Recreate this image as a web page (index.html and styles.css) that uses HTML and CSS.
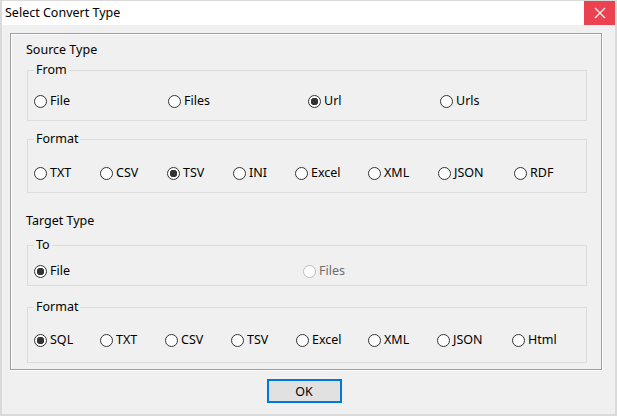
FILE: index.html
```html
<!DOCTYPE html>
<html>
<head>
<meta charset="utf-8">
<title>Select Convert Type</title>
<link rel="stylesheet" href="styles.css">
</head>
<body>
<div class="window">
  <div class="titlebar">
    <span class="title">Select Convert Type</span>
    <span class="close">
      <svg width="12" height="12" viewBox="0 0 12 12"><path d="M1 1 L11 11 M11 1 L1 11" stroke="#fff" stroke-width="1.1" fill="none"/></svg>
    </span>
  </div>
  <div class="client">
    <div class="panel">
      <div class="section-label">Source Type</div>
      <fieldset class="group g-from">
        <legend>From</legend>
        <div class="row cols-from">
          <label class="radio"><span class="dot"></span>File</label>
          <label class="radio"><span class="dot"></span>Files</label>
          <label class="radio checked"><span class="dot"></span>Url</label>
          <label class="radio"><span class="dot"></span>Urls</label>
        </div>
      </fieldset>
      <fieldset class="group g-fmt1">
        <legend>Format</legend>
        <div class="row cols-fmt1">
          <label class="radio"><span class="dot"></span>TXT</label>
          <label class="radio"><span class="dot"></span>CSV</label>
          <label class="radio checked"><span class="dot"></span>TSV</label>
          <label class="radio"><span class="dot"></span>INI</label>
          <label class="radio"><span class="dot"></span>Excel</label>
          <label class="radio"><span class="dot"></span>XML</label>
          <label class="radio"><span class="dot"></span>JSON</label>
          <label class="radio"><span class="dot"></span>RDF</label>
        </div>
      </fieldset>
      <div class="section-label target">Target Type</div>
      <fieldset class="group g-to">
        <legend>To</legend>
        <div class="row cols-to">
          <label class="radio checked"><span class="dot"></span>File</label>
          <label class="radio disabled"><span class="dot"></span>Files</label>
        </div>
      </fieldset>
      <fieldset class="group g-fmt2">
        <legend>Format</legend>
        <div class="row cols-fmt2">
          <label class="radio checked"><span class="dot"></span>SQL</label>
          <label class="radio"><span class="dot"></span>TXT</label>
          <label class="radio"><span class="dot"></span>CSV</label>
          <label class="radio"><span class="dot"></span>TSV</label>
          <label class="radio"><span class="dot"></span>Excel</label>
          <label class="radio"><span class="dot"></span>XML</label>
          <label class="radio"><span class="dot"></span>JSON</label>
          <label class="radio"><span class="dot"></span>Html</label>
        </div>
      </fieldset>
    </div>
    <div class="actions">
      <button class="ok">OK</button>
    </div>
  </div>
</div>
</body>
</html>
```
FILE: styles.css
```css
* { box-sizing: border-box; }
html, body { margin: 0; padding: 0; }
body {
  width: 617px;
  height: 416px;
  overflow: hidden;
  font-family: "Noto Sans", "Open Sans", "DejaVu Sans", sans-serif;
  font-size: 12.5px;
  line-height: 16px;
  color: #000;
  background: #dadada;
}
.window {
  width: 617px;
  height: 416px;
  border-style: solid;
  border-color: #dadada;
  border-width: 1px 2px 2px 2px;
  display: flex;
  flex-direction: column;
}
.titlebar {
  height: 24px;
  background: #fff;
  display: flex;
  align-items: center;
  justify-content: space-between;
  flex: none;
}
.title {
  padding-left: 3px;
}
.close {
  width: 31px;
  height: 24px;
  background: #ea4250;
  display: flex;
  align-items: center;
  justify-content: center;
}
.client {
  flex: 1;
  background: #f0f0f0;
  padding: 8px 13px 0 8px;
}
.panel {
  border: 1px solid #a0a0a0;
  box-shadow: 1px 1px 0 #fff, inset 1px 1px 0 #fff;
  padding: 8px 14px 6px 16px;
  height: 337px;
}
.section-label {
  margin-left: -1px;
  height: 16px;
}
.section-label.target {
  margin-top: 20px;
}
.group {
  margin: 0;
  min-width: 0;
  border: 1px solid #dcdcdc;
  padding: 0 6px;
}
.group legend {
  padding: 0 2px;
  margin-left: 0;
  line-height: 16px;
}
.g-from { margin-top: 4px; padding-top: 15px; padding-bottom: 11px; }
.g-fmt1 { margin-top: 10px; padding-top: 18px; padding-bottom: 11px; }
.g-to { margin-top: 8px; padding-top: 10px; padding-bottom: 6px; }
.g-fmt2 { margin-top: 13px; padding-top: 17px; padding-bottom: 14px; }

.row {
  display: grid;
  align-items: center;
  height: 16px;
}
.cols-from { grid-template-columns: 134px 140px 132px auto; }
.cols-fmt1 { grid-template-columns: 66px 67px 66px 62px 73px 70px 76px auto; }
.cols-to { grid-template-columns: 269px auto; }
.cols-fmt2 { grid-template-columns: 66px 65px 66px 65px 72px 69px 75px auto; }

.radio {
  display: flex;
  align-items: center;
  white-space: nowrap;
}
.dot {
  width: 13px;
  height: 13px;
  border: 1px solid #333;
  border-radius: 50%;
  background: #fff;
  margin-right: 3px;
  flex: none;
}
.radio.checked .dot {
  background: radial-gradient(circle, #333 0 3.5px, #fff 4px);
}
.radio.disabled {
  color: #6d6d6d;
}
.radio.disabled .dot {
  border-color: #bcbcbc;
}
.actions {
  display: flex;
  justify-content: center;
  padding-top: 9px;
  width: 588px;
}
.ok {
  width: 75px;
  height: 24px;
  border: 2px solid #0078d7;
  background: #e1e1e1;
  font-family: inherit;
  font-size: 12.5px;
  color: #000;
  padding: 0;
  margin: 0;
}
```
